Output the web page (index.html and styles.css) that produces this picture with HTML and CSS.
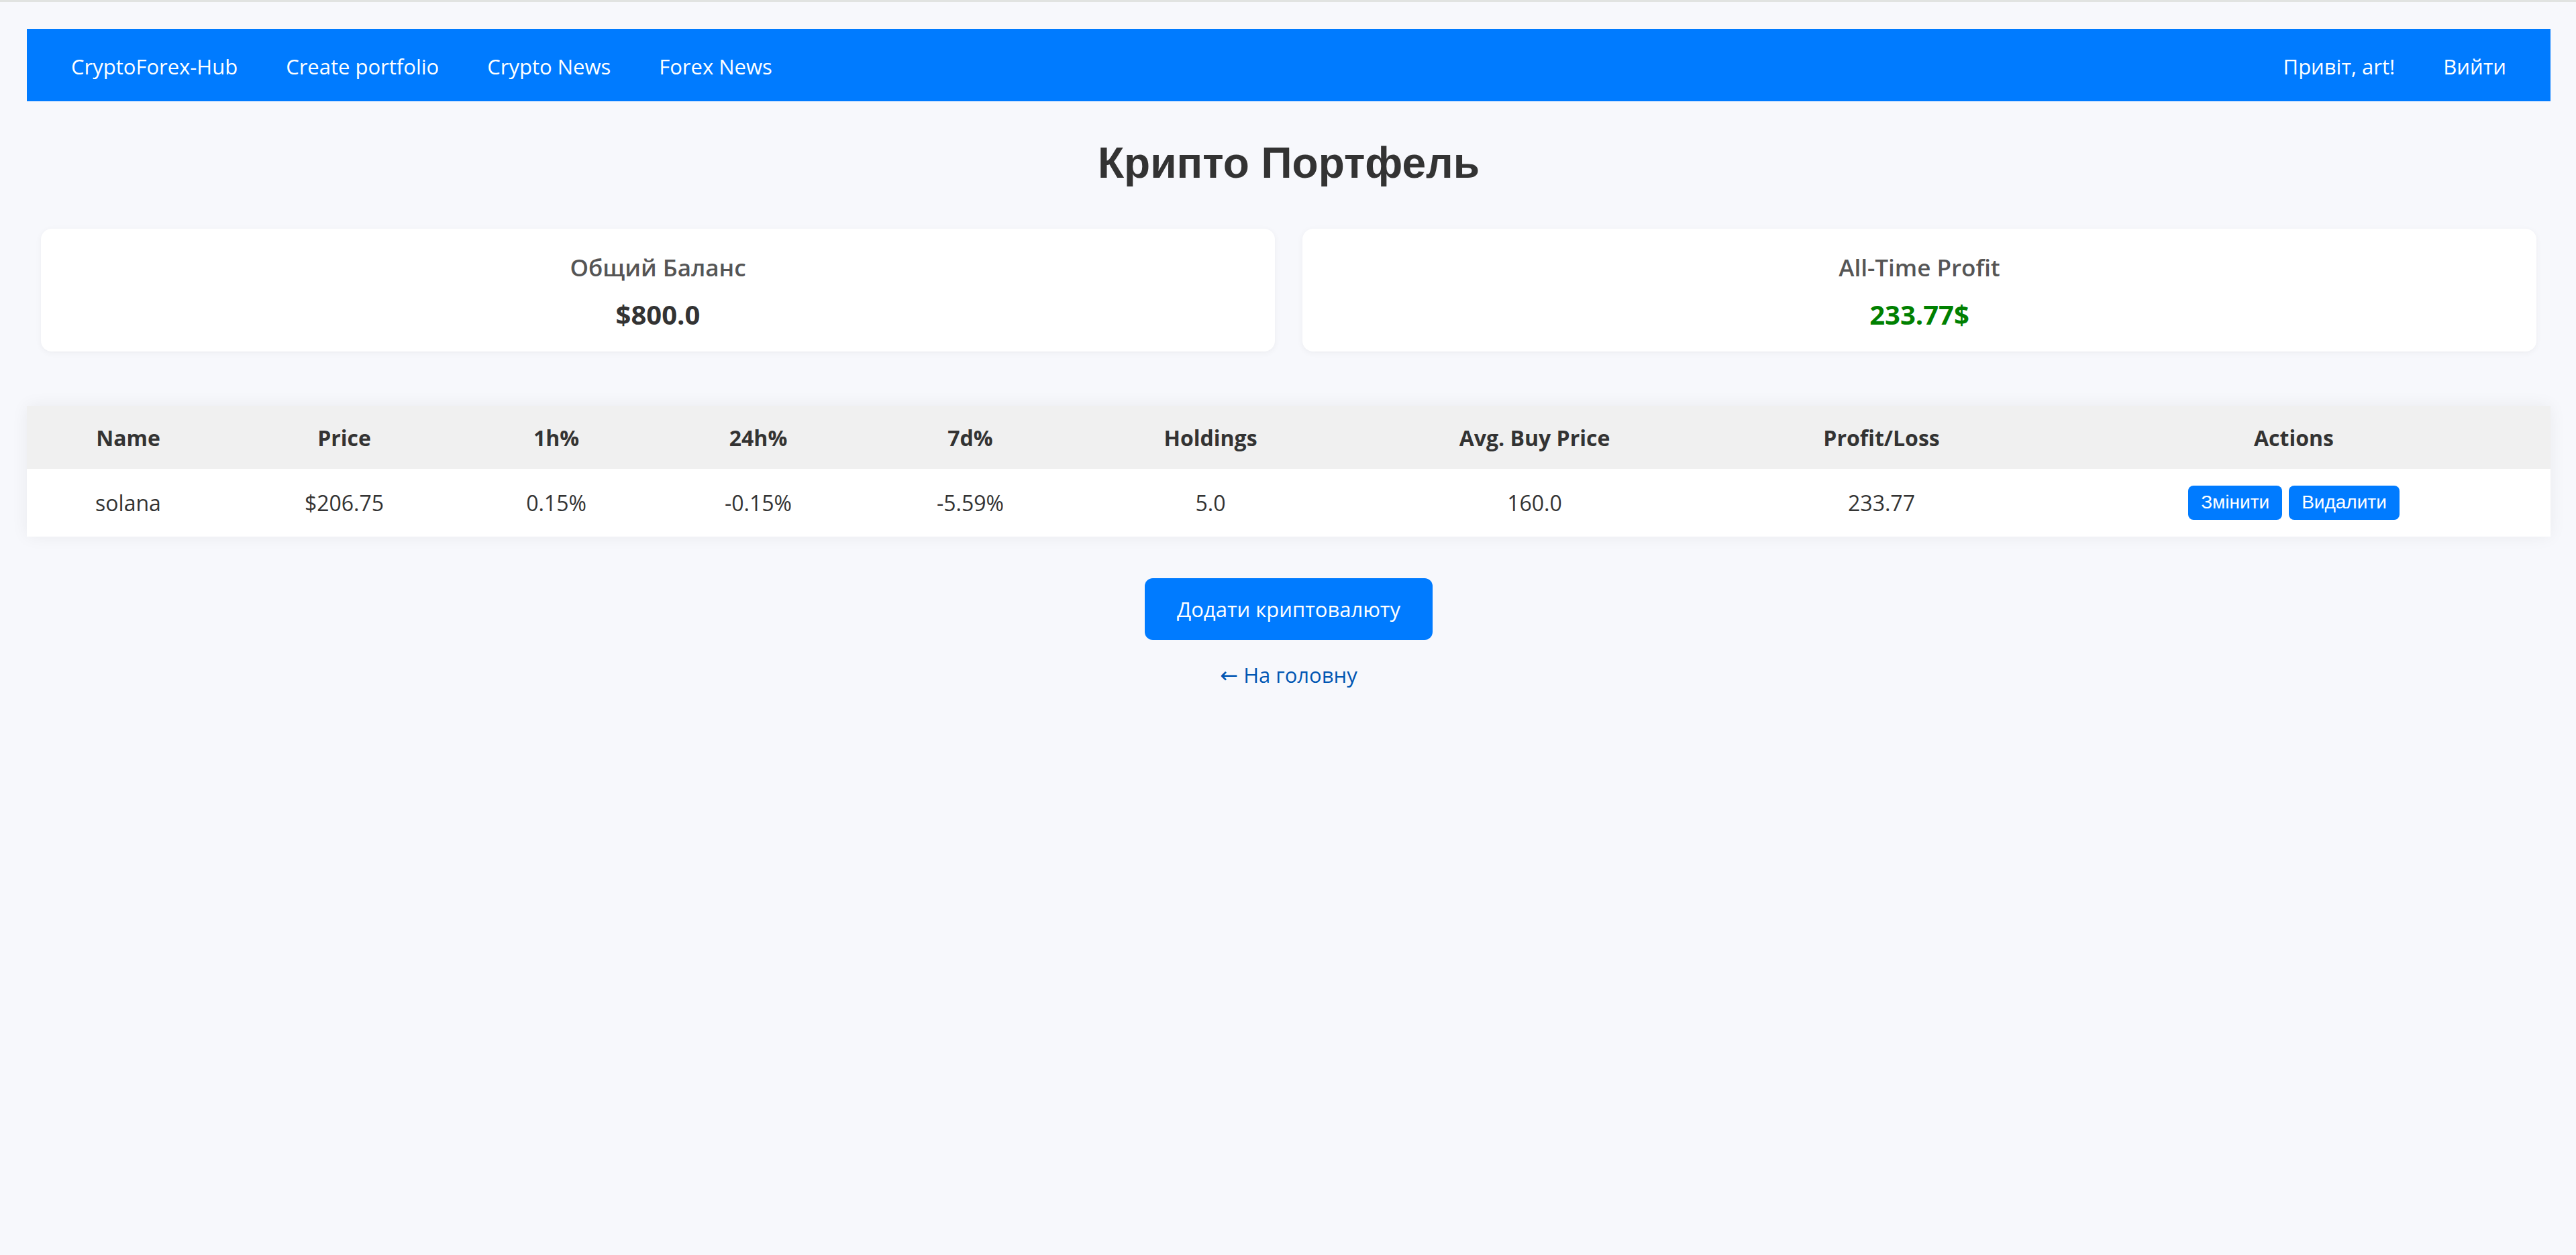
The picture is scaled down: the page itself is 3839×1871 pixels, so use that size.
FILE: index.html
```html
<!DOCTYPE html>
<html lang="uk">
<head>
<meta charset="utf-8">
<title>Крипто Портфель</title>
<link rel="stylesheet" href="styles.css">
</head>
<body>
<div class="topline"></div>
<div class="page">
  <nav class="navbar">
    <div class="nav-group">
      <a class="nav-link" href="#">CryptoForex-Hub</a>
      <a class="nav-link" href="#">Create portfolio</a>
      <a class="nav-link" href="#">Crypto News</a>
      <a class="nav-link" href="#">Forex News</a>
    </div>
    <div class="nav-group nav-right">
      <span class="nav-link">Привіт, art!</span>
      <a class="nav-link" href="#">Вийти</a>
    </div>
  </nav>

  <h1 class="title">Крипто Портфель</h1>

  <div class="cards">
    <div class="card">
      <div class="card-label">Общий Баланс</div>
      <div class="card-value">$800.0</div>
    </div>
    <div class="card">
      <div class="card-label">All-Time Profit</div>
      <div class="card-value profit">233.77$</div>
    </div>
  </div>

  <table class="portfolio">
    <thead>
      <tr>
        <th class="c1">Name</th>
        <th class="c2">Price</th>
        <th class="c3">1h%</th>
        <th class="c4">24h%</th>
        <th class="c5">7d%</th>
        <th class="c6">Holdings</th>
        <th class="c7">Avg. Buy Price</th>
        <th class="c8">Profit/Loss</th>
        <th class="c9">Actions</th>
      </tr>
    </thead>
    <tbody>
      <tr>
        <td>solana</td>
        <td>$206.75</td>
        <td>0.15%</td>
        <td>-0.15%</td>
        <td>-5.59%</td>
        <td>5.0</td>
        <td>160.0</td>
        <td>233.77</td>
        <td><button class="btn-small">Змінити</button><button class="btn-small">Видалити</button></td>
      </tr>
    </tbody>
  </table>

  <div class="actions">
    <button class="btn-add">Додати криптовалюту</button>
    <a class="back-link" href="#"><span class="arrow">←</span> На головну</a>
  </div>
</div>
</body>
</html>
```

FILE: styles.css
```css
html, body {
  margin: 0;
  padding: 0;
}

body {
  background: #f7f8fc;
  font-family: "Open Sans", "Noto Sans", sans-serif;
  color: #333;
  min-height: 1871px;
}

.topline {
  height: 3px;
  background: #e1e3e1;
}

.page {
  padding: 40px 38px 0 40px;
}

.navbar {
  height: 108px;
  background: #007bff;
  display: flex;
  align-items: center;
  justify-content: space-between;
  padding: 0 66px;
}

.nav-group {
  display: flex;
  gap: 72px;
}

.nav-right {
  gap: 72px;
}

.nav-link {
  color: #fff;
  text-decoration: none;
  font-size: 31px;
  line-height: 44px;
  padding-top: 4px;
}

.title {
  font-family: "Liberation Sans", Arial, sans-serif;
  font-weight: bold;
  font-size: 64px;
  line-height: 74px;
  text-align: center;
  color: #333;
  margin: 55px 0 61px;
}

.cards {
  display: grid;
  grid-template-columns: 1fr 1fr;
  gap: 41px;
  margin: 0 21px;
}

.card {
  background: #fff;
  border-radius: 16px;
  box-shadow: 0 2px 10px rgba(0, 0, 0, 0.05);
  height: 183px;
  box-sizing: border-box;
  padding-top: 34px;
  text-align: center;
}

.card-label {
  font-size: 35px;
  line-height: 48px;
  font-weight: 600;
  color: #555;
}

.card-value {
  font-size: 40px;
  line-height: 54px;
  font-weight: bold;
  color: #333;
  margin-top: 19px;
}

.profit {
  color: #008000;
}

.portfolio {
  width: 100%;
  margin-top: 81px;
  border-collapse: collapse;
  table-layout: fixed;
  background: #fff;
  box-shadow: 0 0 24px rgba(0, 0, 0, 0.06);
  font-size: 32px;
}

.portfolio th,
.portfolio td {
  text-align: center;
  vertical-align: middle;
  padding: 0;
  color: #333;
}

.portfolio thead tr {
  background: #f0f0f0;
  height: 94px;
}

.portfolio th {
  font-weight: bold;
}

.portfolio tbody tr {
  height: 101px;
}

.c1 { width: 302px; }
.c2 { width: 342px; }
.c3 { width: 290px; }
.c4 { width: 312px; }
.c5 { width: 320px; }
.c6 { width: 396px; }
.c7 { width: 570px; }
.c8 { width: 464px; }
.c9 { width: auto; }

.btn-small {
  font-family: "Liberation Sans", Arial, sans-serif;
  font-size: 28px;
  line-height: 32px;
  padding: 9px 19px 10px;
  background: #007bff;
  color: #fff;
  border: none;
  border-radius: 8px;
  margin: 0 5px;
  vertical-align: middle;
}

.actions {
  display: flex;
  flex-direction: column;
  align-items: center;
}

.btn-add {
  margin-top: 62px;
  font-family: "Open Sans", "Noto Sans", sans-serif;
  font-size: 31px;
  line-height: 44px;
  padding: 24px 48px;
  background: #007bff;
  color: #fff;
  border: none;
  border-radius: 12px;
}

.back-link {
  margin-top: 30px;
  font-size: 31px;
  line-height: 44px;
  color: #0056b3;
  text-decoration: none;
}

.arrow {
  font-family: "DejaVu Sans", sans-serif;
  font-size: 32px;
}
```
